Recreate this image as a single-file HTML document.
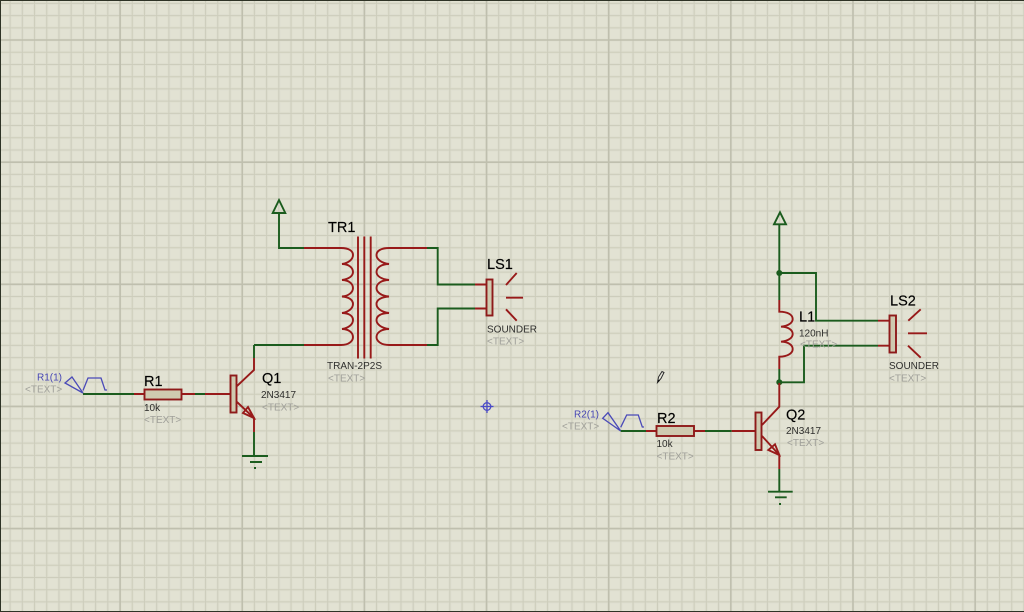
<!DOCTYPE html>
<html><head><meta charset="utf-8"><style>
html,body{margin:0;padding:0;width:1024px;height:612px;overflow:hidden;background:#e2e2d3}
svg{display:block;position:absolute;left:0;top:0}
text{font-family:"Liberation Sans",sans-serif;font-size:10px;fill:#2e2e2c}
.l{font-size:14.500px;fill:#000;stroke:#000;stroke-width:.15}
.t{fill:#a0a09a}
.b{fill:#4646b4}
.g{stroke:#1b5c1e;stroke-width:1.9;fill:none}
.r{stroke:#981a1a;stroke-width:1.9;fill:none}
.f{stroke:#8e1a1a;stroke-width:1.9;fill:#cfcab0}
.u{stroke:#4a4ab8;stroke-width:1.3;fill:none}
.w{filter:blur(.3px)}
</style></head><body>
<svg width="1024" height="612" viewBox="0 0 1024 612" xmlns="http://www.w3.org/2000/svg">
<rect width="1024" height="612" fill="#e2e2d3"/>
<g fill="none">
<path d="M8.600 306H1024" stroke="#dedecf" stroke-width="612" stroke-dasharray="3 9.215"/>
<path d="M512 1.900V612" stroke="#dedecf" stroke-width="1024" stroke-dasharray="3 9.215"/>
<path d="M9.600 306H1024" stroke="#cdcdbc" stroke-width="612" stroke-dasharray="1 11.215"/>
<path d="M512 2.900V612" stroke="#cdcdbc" stroke-width="1024" stroke-dasharray="1 11.215"/>
<path d="M119.300 306H1024" stroke="#bfbfae" stroke-width="612" stroke-dasharray="1.600 120.550"/>
<path d="M512 39.200V612" stroke="#bfbfae" stroke-width="1024" stroke-dasharray="1.600 120.550"/>
</g>
<rect x="0" y="0" width="1024" height="1" fill="#2e3326"/>
<rect x="0" y="0" width="1" height="612" fill="#2e3326"/>
<rect x="0" y="611" width="1024" height="1" fill="#2e3326"/>

<g class="w">
<!-- Circuit 1 -->
<path class="g" d="M83 394H134M195 394H205"/>
<path class="r" d="M134 394H144M182 394H195M205 394H230"/>
<rect class="f" x="144.500" y="389.500" width="37" height="10"/>
<rect class="f" x="230.500" y="375.500" width="6" height="37"/>
<path class="r" d="M237 386L254 370V358M237 402L254 418V432"/>
<path class="r" d="M254 418L248 407L243 413Z"/>
<path class="g" d="M254 358V345M254 432V456M242 456H268M250 462H262M254 468H256"/>
<path class="u" d="M83 393L65 383L72 377L83 393M83 390.500L88 378H101L105 390H107"/>

<path class="g" d="M279 213L272.700 213L279 200L285.300 213L279 213V248H304M254 345H304"/>
<path class="r" d="M304 248H341M304 345H341"/>
<path class="r" d="M341 248C349 248 353 251 353 255C353 259 349 263 342 264C349 264 353 268 353 272C353 276 349 279 342 280C349 280 353 284 353 288C353 292 349 296 342 296.500C349 297 353 300 353 304C353 308 349 312 342 313C349 313 353 316 353 320C353 324 349 328 342 329C349 329 353 333 353 337C353 341 349 345 341 345"/>
<path class="r" d="M389 248C381 248 376.500 251 376.500 255C376.500 259 381 263 389 264C381 264 376.500 268 376.500 272C376.500 276 381 279 389 280C381 280 376.500 284 376.500 288C376.500 292 381 296 389 296.500C381 297 376.500 300 376.500 304C376.500 308 381 312 389 313C381 313 376.500 316 376.500 320C376.500 324 381 328 389 329C381 329 376.500 333 376.500 337C376.500 341 381 345 389 345"/>
<path class="r" d="M358 236.500V358.500M364.300 236.500V358.500M370.700 236.500V358.500"/>
<path class="r" d="M389 248H427M389 345H427M475 284.500H487M475 308.500H487"/>
<path class="g" d="M427 248H437.700V284.500H475M427 345H437.700V308.500H475"/>
<rect class="f" x="486.500" y="279.500" width="6" height="36"/>
<path class="r" d="M506 285L516.700 273M506 297.700H523M506 309.300L516.700 320.700"/>

<g transform="translate(487,406.500)" stroke="#4a4ac8" fill="none" stroke-width="1.300"><circle r="3.800"/><path d="M-6.500 0H6.500M0 -6.500V6.500"/></g>

<!-- Circuit 2 -->
<path class="g" d="M780 224.300L774 224.300L780 212.300L786 224.300L780 224.300M779.300 224V300M779.300 273H816V320.700H878M779.300 382.300H804V345.700H878"/>
<circle cx="779.300" cy="273" r="3" fill="#1b5c1e"/>
<path class="r" d="M779.300 300V311.700C788 311.700 792.700 315 792.700 319C792.700 323 788 326 781 326.700C788 326.700 792.700 330 792.700 334C792.700 338 788 341 781 341.700C788 341.700 792.700 345 792.700 349C792.700 353 788 356.700 779.300 356.700V369"/>
<path class="g" d="M779.300 369V382"/>
<circle cx="779.300" cy="382.300" r="3" fill="#1b5c1e"/>
<path class="r" d="M878 320.700H889.500M878 345.700H889.500"/>
<rect class="f" x="889.500" y="315.500" width="6.500" height="37"/>
<path class="r" d="M908.300 320.700L920.700 309.300M908 333.300H927M908 345.700L920.700 357.700"/>

<path class="u" d="M620.700 431L602.700 418.300L608 412.700L620.700 431M620.700 427.300L626.700 415H638.300L642.300 427H644"/>
<path class="g" d="M620.700 431H646M705 431H731.700"/>
<path class="r" d="M646 431H657M694 431H705M731.700 431H755"/>
<rect class="f" x="656.500" y="426" width="37.500" height="10"/>
<rect class="f" x="755.500" y="412.500" width="6" height="37.500"/>
<path class="r" d="M779.300 383V406.700L762 425M762 436L779.300 455V469"/>
<path class="r" d="M779.300 455L775 444.300L768.300 450Z"/>
<path class="g" d="M779.300 469V491.700M768 491.700H792.700M775 497.300H786.700M779 504H781"/>

<!-- Pencil -->
<path d="M657.500 382.500L658.500 377L662 371.500L664 372.500L661 378.500Z" fill="#e8e8dc" stroke="#2a2a2a" stroke-width="1"/>
<path d="M657.500 383L658 379.500L660 380.500Z" fill="#111"/>

<!-- Labels -->
<text class="b" x="37" y="380.500">R1(1)</text>
<text class="t" x="25" y="392.500">&lt;TEXT&gt;</text>
<text class="l" x="144" y="386">R1</text>
<text x="144" y="411">10k</text>
<text class="t" x="144" y="423">&lt;TEXT&gt;</text>
<text class="l" x="262" y="383">Q1</text>
<text x="261" y="398">2N3417</text>
<text class="t" x="262" y="410.500">&lt;TEXT&gt;</text>
<text class="l" x="328" y="232">TR1</text>
<text x="327" y="369">TRAN-2P2S</text>
<text class="t" x="328" y="381.500">&lt;TEXT&gt;</text>
<text class="l" x="487" y="269">LS1</text>
<text x="487" y="332.500">SOUNDER</text>
<text class="t" x="487" y="344.500">&lt;TEXT&gt;</text>
<text class="b" x="574" y="417.500">R2(1)</text>
<text class="t" x="562" y="429.500">&lt;TEXT&gt;</text>
<text class="l" x="657" y="423">R2</text>
<text x="656.500" y="447">10k</text>
<text class="t" x="656.500" y="459.500">&lt;TEXT&gt;</text>
<text class="l" x="786" y="419.500">Q2</text>
<text x="786" y="434">2N3417</text>
<text class="t" x="787" y="446">&lt;TEXT&gt;</text>
<text class="l" x="799" y="321.500">L1</text>
<text x="799" y="336.500">120nH</text>
<text class="t" x="800" y="347.500">&lt;TEXT&gt;</text>
<text class="l" x="890" y="305.500">LS2</text>
<text x="889" y="369">SOUNDER</text>
<text class="t" x="889" y="381.500">&lt;TEXT&gt;</text>
</g>
</svg>
</body></html>
